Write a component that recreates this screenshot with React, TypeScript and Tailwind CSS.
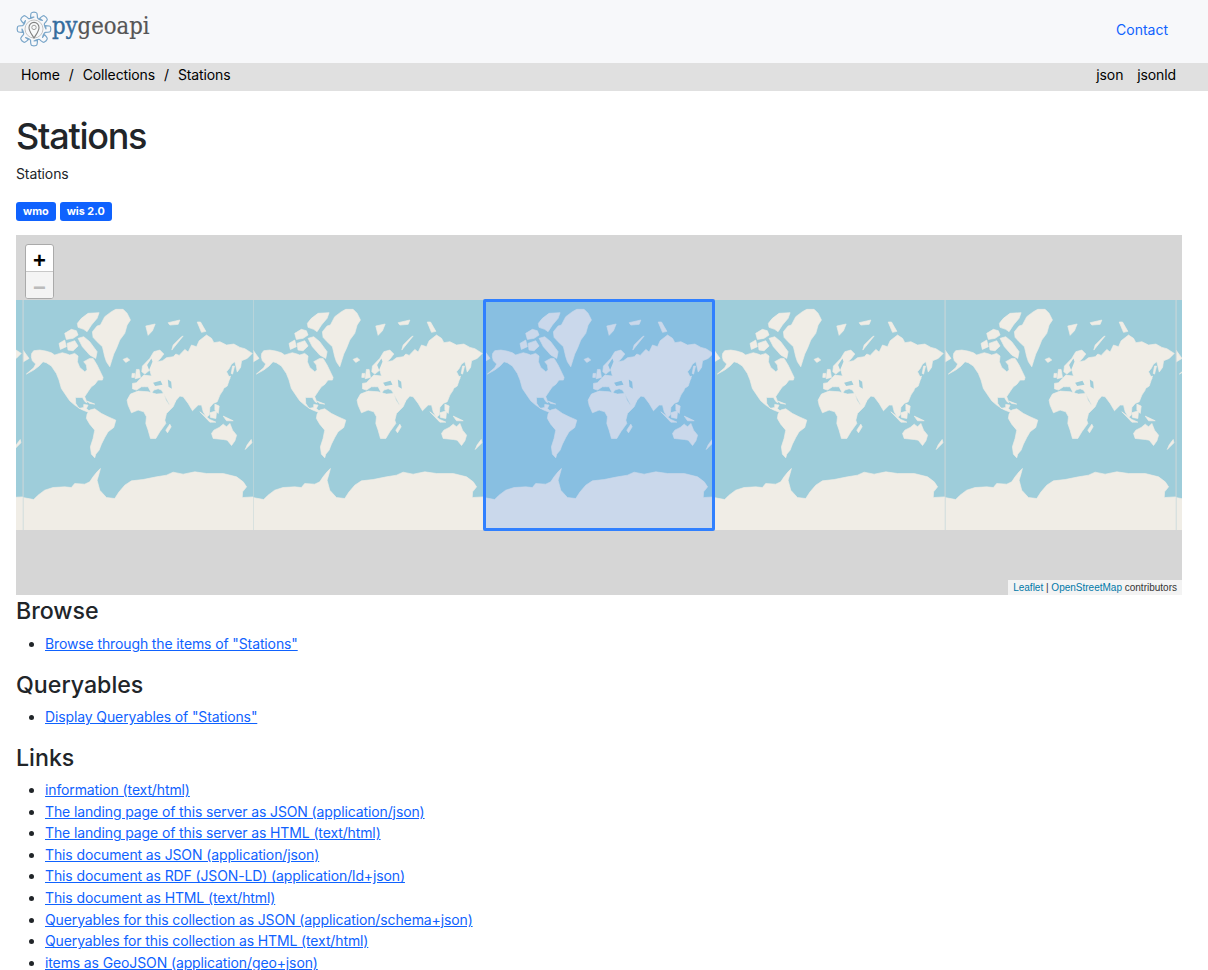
import React from "react";

const LAND = "#f0ede6";
const SEA = "#9ecdda";

const land: string[] = [
  // North America
  "M66,190 L72,182 L90,180 L108,183 L125,188 L135,195 L150,190 L158,188 L172,192 L180,195 L195,190 L205,198 L203,215 L210,232 L225,245 L232,240 L230,225 L222,215 L240,205 L250,205 L262,225 L280,262 L278,270 L265,270 L255,283 L245,290 L238,300 L228,315 L225,320 L232,338 L226,335 L218,322 L205,322 L197,322 L198,340 L208,355 L222,352 L222,343 L235,345 L230,355 L238,362 L250,372 L232,365 L215,358 L195,345 L180,332 L165,310 L155,295 L148,270 L140,250 L125,228 L110,218 L100,215 L88,228 L72,240 L50,252 L72,233 L78,222 L68,212 L65,200 Z",
  // Arctic archipelago
  "M203,100 L215,85 L235,70 L268,68 L262,85 L245,105 L232,125 L222,118 L205,112 Z",
  "M165,130 L185,118 L200,122 L205,135 L190,145 L170,148 Z",
  "M148,160 L165,150 L170,170 L152,178 Z",
  "M172,160 L195,152 L205,168 L190,182 L175,180 Z",
  "M205,145 L222,140 L240,155 L262,185 L258,205 L240,195 L218,170 Z",
  // Greenland
  "M248,125 L262,108 L272,105 L285,80 L305,65 L318,58 L340,58 L352,70 L362,90 L352,105 L345,130 L330,150 L320,175 L312,192 L300,230 L290,215 L285,200 L278,170 L262,155 L250,142 Z",
  // Iceland
  "M340,208 L352,203 L360,210 L348,217 Z",
  // South America
  "M232,372 L240,360 L255,356 L275,370 L295,380 L318,390 L312,412 L295,425 L285,442 L275,462 L268,480 L258,492 L255,503 L245,492 L242,470 L250,445 L255,420 L240,402 L230,385 Z",
  // Africa
  "M355,345 L352,330 L362,312 L385,303 L415,305 L440,312 L462,310 L468,330 L478,345 L498,332 L490,350 L470,370 L465,390 L468,400 L450,425 L438,445 L422,445 L415,420 L408,400 L410,380 L402,365 L385,360 L365,368 Z",
  // Eurasia
  "M368,296 L368,280 L380,278 L392,265 L402,255 L425,258 L420,240 L405,252 L396,245 L398,228 L420,205 L432,185 L450,180 L462,192 L452,205 L442,215 L458,212 L470,203 L490,200 L498,192 L508,196 L525,178 L535,186 L545,165 L560,170 L568,152 L590,135 L605,145 L612,158 L630,155 L650,165 L672,162 L690,172 L705,176 L727,190 L712,205 L695,212 L692,232 L682,246 L675,215 L665,222 L658,235 L650,245 L660,265 L640,285 L640,300 L630,315 L622,335 L610,340 L600,352 L598,375 L590,382 L580,365 L575,345 L565,345 L548,362 L535,340 L520,320 L510,318 L495,335 L480,345 L462,312 L455,300 L445,296 L432,300 L425,310 L415,290 L405,290 L395,290 L380,300 Z",
  // UK and Ireland
  "M380,238 L388,238 L392,262 L376,266 Z",
  "M367,250 L375,250 L374,262 L366,262 Z",
  // Svalbard, Franz Josef, Severnaya
  "M408,108 L436,102 L428,122 L415,136 Z",
  "M475,98 L510,90 L505,103 L480,105 Z",
  "M562,96 L572,96 L588,124 L575,127 Z",
  // Novaya Zemlya
  "M515,140 L520,138 L494,170 L486,180 L490,165 Z",
  // Japan, Sakhalin
  "M650,262 L662,258 L652,288 L630,302 L640,285 Z",
  "M668,228 L674,228 L668,252 L664,250 Z",
  // Indonesia and Philippines
  "M570,365 L600,388 L618,396 L600,396 Z",
  "M600,368 L620,362 L618,385 L602,382 Z",
  "M640,378 L670,392 L650,392 Z",
  "M615,342 L628,348 L625,370 L615,360 Z",
  // Australia
  "M605,430 L612,420 L628,412 L640,402 L650,410 L660,400 L668,420 L680,435 L675,452 L665,466 L652,450 L640,448 L610,445 Z",
  // Madagascar
  "M480,402 L484,410 L473,428 L468,420 Z",
  // New Zealand
  "M724,448 L726,458 L706,478 L712,464 Z",
  // Cuba
  "M232,333 L255,342 L240,340 Z",
  // Chukotka wrap
  "M40,180 L58,205 L40,216 Z",
  // Antarctica
  "M40,622 L72,628 L85,615 L105,600 L130,592 L165,590 L185,592 L195,580 L225,582 L240,575 L250,560 L262,545 L272,535 L268,550 L262,570 L270,600 L290,622 L315,625 L328,605 L345,585 L365,572 L400,568 L440,560 L470,555 L490,546 L520,552 L555,545 L590,550 L640,550 L680,560 L700,575 L710,590 L698,605 L697,622 L731,620 L731,722 L40,722 Z",
];

const water: string[] = [
  "M430,278 L452,272 L458,284 L436,288 Z",
  "M474,268 L484,275 L486,296 L476,290 Z",
  "M412,225 L425,205 L428,215 L418,240 Z",
];

function Tile() {
  return (
    <svg width="230.6" height="230.6" viewBox="0 0 230.6 230.6" className="block shrink-0">
      <rect width="230.6" height="230.6" fill={SEA} />
      <g transform="scale(0.3337) translate(-40,-30)">
        {land.map((d, i) => (
          <path key={i} d={d} fill={LAND} stroke={LAND} strokeWidth="2" strokeLinejoin="round" />
        ))}
        {water.map((d, i) => (
          <path key={i} d={d} fill={SEA} />
        ))}
      </g>
      <path d="M0.25,0 V231" stroke="#c9d9da" strokeWidth="0.8" fill="none" />
    </svg>
  );
}

function gearPath(cx: number, cy: number) {
  const n = 8;
  const rOut = 16.6;
  const rIn = 12;
  const pt = (r: number, a: number) =>
    `${(cx + r * Math.cos(a)).toFixed(2)},${(cy + r * Math.sin(a)).toFixed(2)}`;
  let d = "";
  for (let i = 0; i < n; i++) {
    const a = (i * 2 * Math.PI) / n - Math.PI / 2;
    const w = 0.2;
    const g = 0.29;
    d += `${i === 0 ? "M" : "L"}${pt(rIn, a - g)} `;
    d += `Q${pt(rOut + 0.5, a - w)} ${pt(rOut, a - w * 0.55)} `;
    d += `Q${pt(rOut + 0.6, a)} ${pt(rOut, a + w * 0.55)} `;
    d += `Q${pt(rOut + 0.5, a + w)} ${pt(rIn, a + g)} `;
    d += `Q${pt(rIn - 1.5, a + Math.PI / n)} ${pt(rIn, a + 2 * g + 0.2)} `;
  }
  return d + "Z";
}

function Logo() {
  return (
    <svg width="36" height="36" viewBox="0 0 36 36" className="block shrink-0">
      <path d={gearPath(18, 18)} fill="none" stroke="#7aa6c9" strokeWidth="1.2" strokeLinejoin="round" />
      <circle cx="18" cy="18" r="9" fill="none" stroke="#c4c4c4" strokeWidth="1" />
      <path d="M18,27 C15.6,23 13,20.2 13,16.4 A5,5 0 0 1 23,16.4 C23,20.2 20.4,23 18,27 Z" fill="#f8f9fa" stroke="#808080" strokeWidth="1.1" />
      <circle cx="18" cy="16.4" r="2.2" fill="none" stroke="#a0a0a0" strokeWidth="1" />
    </svg>
  );
}

const links = [
  "information (text/html)",
  "The landing page of this server as JSON (application/json)",
  "The landing page of this server as HTML (text/html)",
  "This document as JSON (application/json)",
  "This document as RDF (JSON-LD) (application/ld+json)",
  "This document as HTML (text/html)",
  "Queryables for this collection as JSON (application/schema+json)",
  "Queryables for this collection as HTML (text/html)",
  "items as GeoJSON (application/geo+json)",
];

function LinkList({ items }: { items: string[] }) {
  return (
    <ul className="list-disc pl-[29px] mb-[16.4px]">
      {items.map((t) => (
        <li key={t}>
          <a href="#" className="text-[#0f62fe] underline">{t}</a>
        </li>
      ))}
    </ul>
  );
}

export default function App() {
  return (
    <div className="h-[970px] overflow-hidden bg-white text-[14px] tracking-[-0.12px] leading-[21.6px] text-[#212529] font-['Inter',sans-serif]">
      <header className="h-[63px] bg-[#f7f8fa] flex items-start justify-between pl-4 pr-10">
        <div className="flex items-start mt-[11px]">
          <Logo />
          <span className="origin-left scale-x-[0.85] font-['DejaVu_Serif',serif] text-[25px] leading-[32px] tracking-normal -mt-[1px] whitespace-nowrap">
            <span className="text-[#336c9e] [-webkit-text-stroke:0.4px_#336c9e]">py</span>
            <span className="text-[#555555] [-webkit-text-stroke:0.2px_#555555]">geoapi</span>
          </span>
        </div>
        <a href="#" className="text-[#0f62fe] mt-[19px] tracking-normal">Contact</a>
      </header>
      <nav className="h-7 bg-[#e0e0e0] flex items-center justify-between pl-[21px] pr-8 pb-1 text-black">
        <div className="flex gap-[9px]">
          <span>Home</span><span>/</span><span>Collections</span><span>/</span><span>Stations</span>
        </div>
        <div className="flex gap-[14px]">
          <span>json</span><span>jsonld</span>
        </div>
      </nav>
      <main className="px-4 pt-[24px]">
        <h1 className="text-[36px] leading-[43.2px] font-medium tracking-[-1.25px] mb-[5px]">Stations</h1>
        <p className="mb-[17px]">Stations</p>
        <div className="flex gap-1 mb-[14px]">
          <span className="h-[19px] px-[7px] rounded-[3px] bg-[#0f62fe] text-white text-[10.8px] leading-[19px] font-bold tracking-normal">wmo</span>
          <span className="h-[19px] px-[7px] rounded-[3px] bg-[#0f62fe] text-white text-[10.8px] leading-[19px] font-bold tracking-normal">wis 2.0</span>
        </div>
        <div className="relative w-[1166px] h-[360px] bg-[#d6d6d6] overflow-hidden">
          <div className="absolute left-[-224px] top-[65px] flex">
            {[0, 1, 2, 3, 4, 5, 6].map((i) => <Tile key={i} />)}
          </div>
          <div className="absolute left-[467px] top-[64px] w-[232px] h-[232px] border-[3px] border-[#3080ff] bg-[#3388ff]/20 rounded-[2px]" />
          <div className="absolute left-[9px] top-[9px] w-[29px] h-[55px] rounded-[3px] border border-[#aaaaaa] overflow-hidden bg-white tracking-normal">
            <div className="h-[27px] pt-[6px] border-b border-[#c8c8c8] flex items-center justify-center text-black text-[22px] leading-none font-bold font-['Liberation_Sans',sans-serif]">+</div>
            <div className="h-[27px] pt-[6px] bg-[#f4f4f4] flex items-center justify-center text-[#bbbbbb] text-[22px] leading-none font-bold font-['Liberation_Sans',sans-serif]">−</div>
          </div>
          <div className="absolute right-0 bottom-0 h-[15px] px-[5px] bg-white/70 text-[10px] leading-[15px] tracking-normal text-[#333333] font-['Liberation_Sans',sans-serif]">
            <a href="#" className="text-[#0078a8]">Leaflet</a> | <a href="#" className="text-[#0078a8]">OpenStreetMap</a> contributors
          </div>
        </div>
        <h2 className="text-[23.2px] leading-[28px] font-medium tracking-normal mt-[2px] mb-[8.3px]">Browse</h2>
        <LinkList items={['Browse through the items of "Stations"']} />
        <h2 className="text-[23.2px] leading-[28px] font-medium tracking-normal mb-[7px]">Queryables</h2>
        <LinkList items={['Display Queryables of "Stations"']} />
        <h2 className="text-[23.2px] leading-[28px] font-medium tracking-normal mb-[7px]">Links</h2>
        <LinkList items={links} />
      </main>
    </div>
  );
}
